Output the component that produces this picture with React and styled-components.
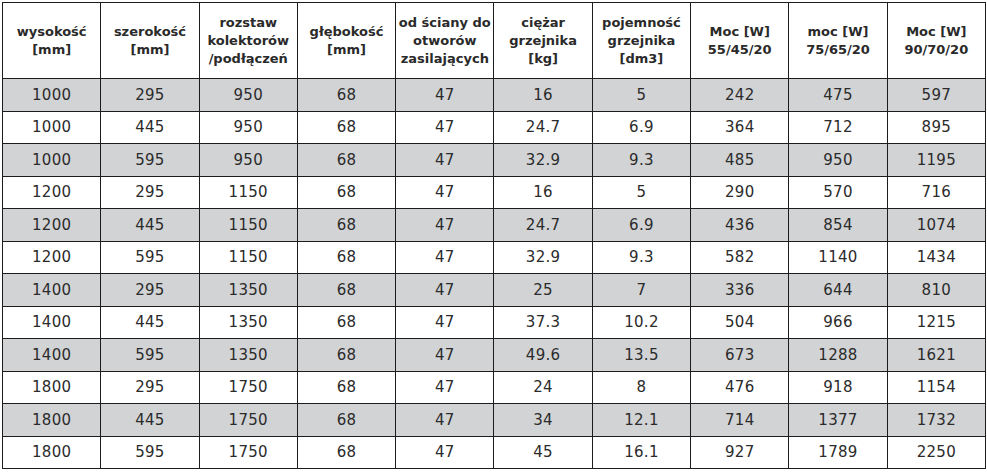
import React from "react";
import styled, { createGlobalStyle } from "styled-components";

const Global = createGlobalStyle`
  html, body { margin: 0; padding: 0; background: #ffffff; }
  body { padding: 2px 0 0 2px; }
`;

const Table = styled.table`
  width: 984px;
  border-collapse: collapse;
  table-layout: fixed;
  font-family: "DejaVu Sans", "Liberation Sans", sans-serif;
  color: #262626;
`;

const HeadCell = styled.th`
  height: 75px;
  padding: 0;
  border: 1.5px solid #1c1c1c;
  font-size: 13px;
  font-weight: bold;
  line-height: 18px;
  text-align: center;
  vertical-align: middle;
  white-space: nowrap;
  color: #2a2a2a;
`;

const Row = styled.tr`
  background: ${(p) => (p.$shaded ? "#d2d3d5" : "#ffffff")};
`;

const Cell = styled.td`
  height: 31.5px;
  padding: 0;
  border: 1.5px solid #1c1c1c;
  font-size: 15px;
  text-align: center;
  vertical-align: middle;
  color: #2b2b2b;
  letter-spacing: 0.3px;
`;

const headers = [
  ["wysokość", "[mm]"],
  ["szerokość", "[mm]"],
  ["rozstaw", "kolektorów", "/podłączeń"],
  ["głębokość", "[mm]"],
  ["od ściany do", "otworów", "zasilających"],
  ["ciężar", "grzejnika", "[kg]"],
  ["pojemność", "grzejnika", "[dm3]"],
  ["Moc [W]", "55/45/20"],
  ["moc [W]", "75/65/20"],
  ["Moc [W]", "90/70/20"],
];

const rows = [
  ["1000", "295", "950", "68", "47", "16", "5", "242", "475", "597"],
  ["1000", "445", "950", "68", "47", "24.7", "6.9", "364", "712", "895"],
  ["1000", "595", "950", "68", "47", "32.9", "9.3", "485", "950", "1195"],
  ["1200", "295", "1150", "68", "47", "16", "5", "290", "570", "716"],
  ["1200", "445", "1150", "68", "47", "24.7", "6.9", "436", "854", "1074"],
  ["1200", "595", "1150", "68", "47", "32.9", "9.3", "582", "1140", "1434"],
  ["1400", "295", "1350", "68", "47", "25", "7", "336", "644", "810"],
  ["1400", "445", "1350", "68", "47", "37.3", "10.2", "504", "966", "1215"],
  ["1400", "595", "1350", "68", "47", "49.6", "13.5", "673", "1288", "1621"],
  ["1800", "295", "1750", "68", "47", "24", "8", "476", "918", "1154"],
  ["1800", "445", "1750", "68", "47", "34", "12.1", "714", "1377", "1732"],
  ["1800", "595", "1750", "68", "47", "45", "16.1", "927", "1789", "2250"],
];

export default function App() {
  return (
    <>
      <Global />
      <Table>
        <thead>
          <tr>
            {headers.map((lines, i) => (
              <HeadCell key={i}>
                {lines.map((l, j) => (
                  <React.Fragment key={j}>
                    {j > 0 && <br />}
                    {l}
                  </React.Fragment>
                ))}
              </HeadCell>
            ))}
          </tr>
        </thead>
        <tbody>
          {rows.map((r, i) => (
            <Row key={i} $shaded={i % 2 === 0}>
              {r.map((v, j) => (
                <Cell key={j}>{v}</Cell>
              ))}
            </Row>
          ))}
        </tbody>
      </Table>
    </>
  );
}
